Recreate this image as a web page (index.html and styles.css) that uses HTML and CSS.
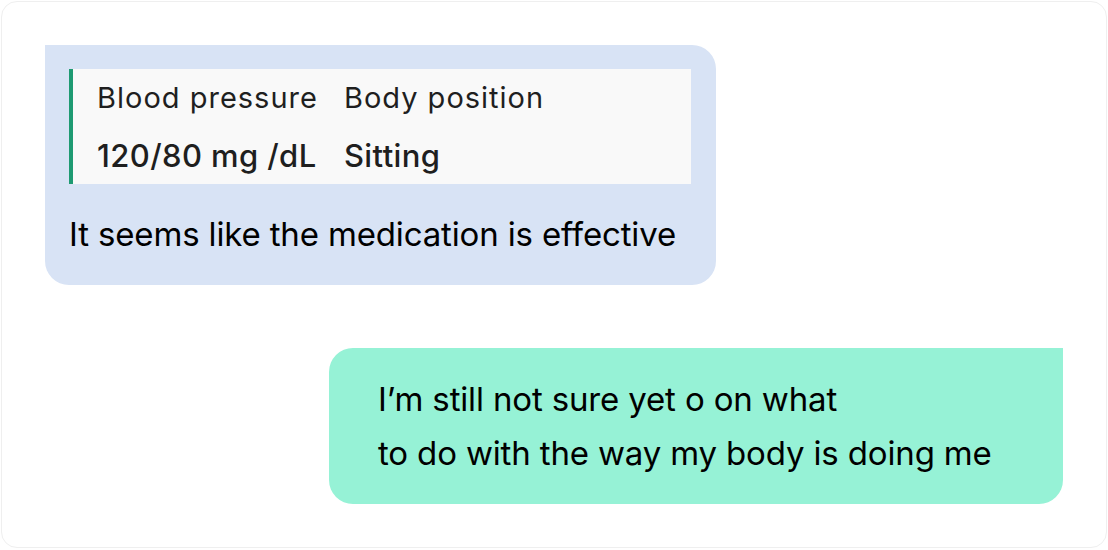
FILE: index.html
```html
<!DOCTYPE html>
<html lang="en">
<head>
<meta charset="utf-8">
<title>Chat</title>
<link rel="stylesheet" href="styles.css">
</head>
<body>
<div class="card">
  <div class="msg msg-in">
    <div class="vitals">
      <div class="vitals-grid">
        <span class="label">Blood pressure</span>
        <span class="label">Body position</span>
        <span class="value">120/80 mg /dL</span>
        <span class="value">Sitting</span>
      </div>
    </div>
    <p class="msg-text">It seems like the medication is effective</p>
  </div>
  <div class="msg msg-out">
    <p class="msg-text">I’m still not sure yet o on what<br>to do with the way my body is doing me</p>
  </div>
</div>
</body>
</html>
```
FILE: styles.css
```css
html, body {
  margin: 0;
  padding: 0;
  background: #ffffff;
}
body {
  font-family: Inter, "Noto Sans", sans-serif;
  color: #000;
  padding: 1px;
}
.card {
  box-sizing: border-box;
  width: 1106px;
  height: 547px;
  border: 1px solid #efefef;
  border-radius: 16px;
  background: #fff;
  padding: 43px 43px 0 43px;
  display: flex;
  flex-direction: column;
}
.msg {
  box-sizing: border-box;
}
.msg-in {
  align-self: flex-start;
  width: 671px;
  background: #d8e3f5;
  border-radius: 0 24px 24px 24px;
  padding: 24px 25px 25px 24px;
}
.vitals {
  background: #f9f9f9;
  border-left: 4px solid #1e9a72;
  padding: 12px 24px 11px 24px;
}
.vitals-grid {
  display: grid;
  grid-template-columns: auto auto;
  justify-content: start;
  column-gap: 26px;
  row-gap: 24px;
  line-height: 34px;
  color: #1f1f1f;
}
.label {
  font-size: 29px;
  font-weight: 400;
  letter-spacing: 1px;
}
.value {
  font-size: 31px;
  font-weight: 500;
  letter-spacing: 0.4px;
}
.msg-text {
  margin: 0;
  font-size: 33px;
  line-height: 52px;
  letter-spacing: -0.15px;
}
.msg-in .msg-text {
  margin-top: 24px;
}
.msg-out {
  align-self: flex-end;
  width: 734px;
  margin-top: 63px;
  background: #96f2d6;
  border-radius: 24px 0 24px 24px;
  padding: 24px 48px 24px 49px;
}
.msg-out .msg-text {
  line-height: 54px;
}
```
